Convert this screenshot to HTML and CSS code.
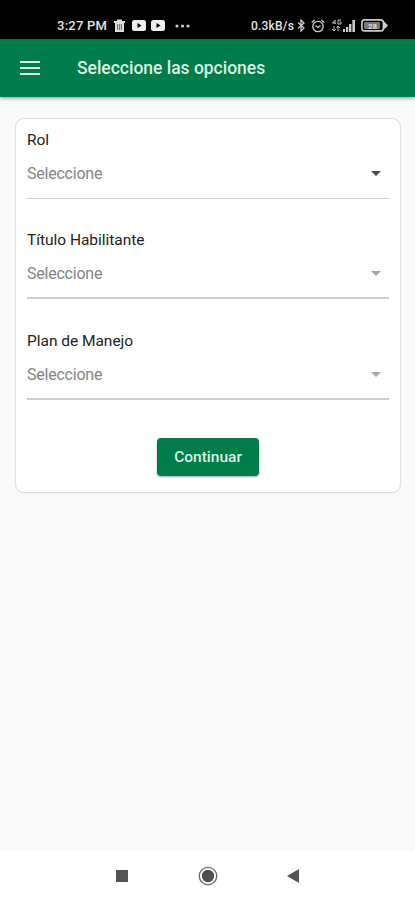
FILE: index.html
```html
<!DOCTYPE html>
<html lang="es">
<head>
<meta charset="utf-8">
<title>Seleccione las opciones</title>
<link rel="stylesheet" href="styles.css">
</head>
<body>
<div class="status">
  <span class="time">3:27 PM</span>
  <svg class="trash" width="11" height="13" viewBox="0 0 11 13"><path d="M0 2h3V.5h5V2h3v2h-1v9H1V4H0z" fill="#ddd"/><path d="M3 5h5v6H3z" fill="#777"/><path d="M4.5 5v6M6.5 5v6" stroke="#ddd" stroke-width=".8"/></svg>
  <svg class="video" width="14" height="11" viewBox="0 0 14 11"><rect width="14" height="11" rx="2.5" fill="#eee"/><path d="M5.5 3l4 2.5-4 2.5z"/></svg>
  <svg class="video" width="14" height="11" viewBox="0 0 14 11"><rect width="14" height="11" rx="2.5" fill="#eee"/><path d="M5.5 3l4 2.5-4 2.5z"/></svg>
  <svg class="dots" width="15" height="4" viewBox="0 0 15 4" fill="#ccc"><circle cx="2" cy="2" r="1.6"/><circle cx="7.5" cy="2" r="1.6"/><circle cx="13" cy="2" r="1.6"/></svg>
  <span class="speed">0.3kB/s</span>
  <svg class="bt" width="8" height="13" viewBox="0 0 8 13" fill="none" stroke="#ccc" stroke-width="1.3"><path d="M1 3.5l6 5.5-3 3V1l3 3-6 5.5"/></svg>
  <svg class="alarm" width="14" height="14" viewBox="0 0 14 14" fill="none" stroke="#ccc" stroke-width="1.3"><circle cx="7" cy="7.5" r="5.2"/><path d="M.7 3.5L3.7 1M13.3 3.5l-3-2.5M4.5 6.5L7 8.5l2.5-2"/></svg>
  <svg class="signal" width="24" height="13" viewBox="0 0 24 13" fill="#ccc"><path d="M11 10h2v3h-2zM14 8h2.2v5H14zM17 5h2.4v8H17zM20.4 1h2.6v12h-2.6z"/><path d="M1 4l2-3v4M0 4h4M9 1H6v4h3V3H7.5M2 7v5M0 10l2 2 2-2M6 12V7M4.5 9L6 7l2 2" fill="none" stroke="#bbb" stroke-width="1"/></svg>
  <svg class="battery" width="27" height="13" viewBox="0 0 27 13"><rect x=".9" y=".9" width="21.5" height="11" rx="2.7" fill="none" stroke="#ccc" stroke-width="1.6"/><rect x="3" y="3" width="16" height="7" rx="1" fill="#777"/><path d="M23 2.5l4 4-4 4z" fill="#ccc"/><text x="11.5" y="9.6" text-anchor="middle" class="charge">28</text></svg>
</div>
<header class="bar">
  <svg width="20" height="14" viewBox="0 0 20 14" fill="#d9f0e4"><path d="M0 0h20v2H0zM0 6h20v2H0zM0 12h20v2H0z"/></svg>
  <h1>Seleccione las opciones</h1>
</header>
<main>
  <section class="card">
    <div class="field">
      <label>Rol</label>
      <div class="select on"><span>Seleccione</span><i></i></div>
    </div>
    <div class="field">
      <label>Título Habilitante</label>
      <div class="select"><span>Seleccione</span><i></i></div>
    </div>
    <div class="field">
      <label>Plan de Manejo</label>
      <div class="select"><span>Seleccione</span><i></i></div>
    </div>
    <button>Continuar</button>
  </section>
</main>
<nav>
  <svg width="12" height="12" viewBox="0 0 12 12"><path d="M0 0h12v12H0z" fill="#555"/></svg>
  <svg width="20" height="20" viewBox="0 0 20 20"><circle cx="10" cy="10" r="8.7" fill="none" stroke="#666" stroke-width="1.3"/><circle cx="10" cy="10" r="6.2" fill="#505050"/></svg>
  <svg width="12" height="14" viewBox="0 0 12 14"><path d="M12 0v14L0 7z" fill="#555"/></svg>
</nav>
</body>
</html>
```
FILE: styles.css
```css
* { box-sizing: border-box; }
body {
  margin: 0;
  height: 900px;
  display: flex;
  flex-direction: column;
  background: #fafafa;
  font-family: Roboto, sans-serif;
  overflow: hidden;
}
.status {
  height: 39px;
  flex: none;
  padding: 12px 27px 0 57px;
  display: flex;
  align-items: center;
  background: #000;
  color: #e4e4e4;
}
.status > * { flex: none; }
.time { width: 50px; font-size: 13px; font-weight: 500; letter-spacing: .25px; white-space: nowrap; }
.trash { margin-left: 7px; }
.video { margin-left: 7px; }
.video + .video { margin-left: 5px; }
.dots { margin-left: 10px; }
.speed { margin-left: auto; width: 44px; font-size: 12px; font-weight: 500; letter-spacing: .2px; white-space: nowrap; }
.bt { margin-left: 2px; }
.alarm { margin-left: 6px; }
.signal { margin-left: 7px; }
.battery { margin-left: 5px; }
.charge { font-size: 8px; font-weight: 700; fill: #ddd; }
.bar {
  height: 58px;
  flex: none;
  padding-left: 20px;
  display: flex;
  align-items: center;
  gap: 37px;
  background: #017d4b;
  box-shadow: 0 1px 4px rgba(0, 0, 0, .45);
}
h1 { margin: 0; font-size: 17.5px; font-weight: 500; line-height: 20px; color: #d9f0e4; letter-spacing: -.02px; }
main { flex: 1; padding: 21px 14px 0 15px; }
.card {
  height: 375px;
  padding: 10.7px 11px 0;
  border: 1px solid #dedede;
  border-radius: 9px;
  background: #fff;
  box-shadow: 0 0 1px #ddd;
  display: flex;
  flex-direction: column;
}
.field { height: 100.5px; flex: none; }
label { display: block; height: 20px; font-size: 15.5px; line-height: 20px; color: #222; letter-spacing: -.03px; }
.select {
  height: 49px;
  padding: 14px 8px 0 0;
  border-bottom: 2px solid #cecece;
  display: flex;
  justify-content: space-between;
  font-size: 16px;
  line-height: 20px;
  letter-spacing: -.23px;
  color: #858585;
}
.select i { margin-top: 7px; width: 0; height: 0; border: 5px solid transparent; border-top-color: #aaa; border-bottom: 0; }
.select.on { border-bottom-width: 1.5px; }
.select.on i { border-top-color: #4a4a4a; }
button {
  width: 102px;
  height: 38px;
  margin: 6.4px 0 0 130px;
  padding: 0;
  border: 0;
  border-radius: 4px;
  background: #017d4b;
  box-shadow: 0 1px 2px rgba(0, 0, 0, .35);
  color: #d9f0e4;
  font: 500 15.5px/39px Roboto, sans-serif;
}
nav {
  height: 49px;
  flex: none;
  padding: 0 116px;
  display: flex;
  align-items: center;
  justify-content: space-between;
  background: #fff;
}
```
